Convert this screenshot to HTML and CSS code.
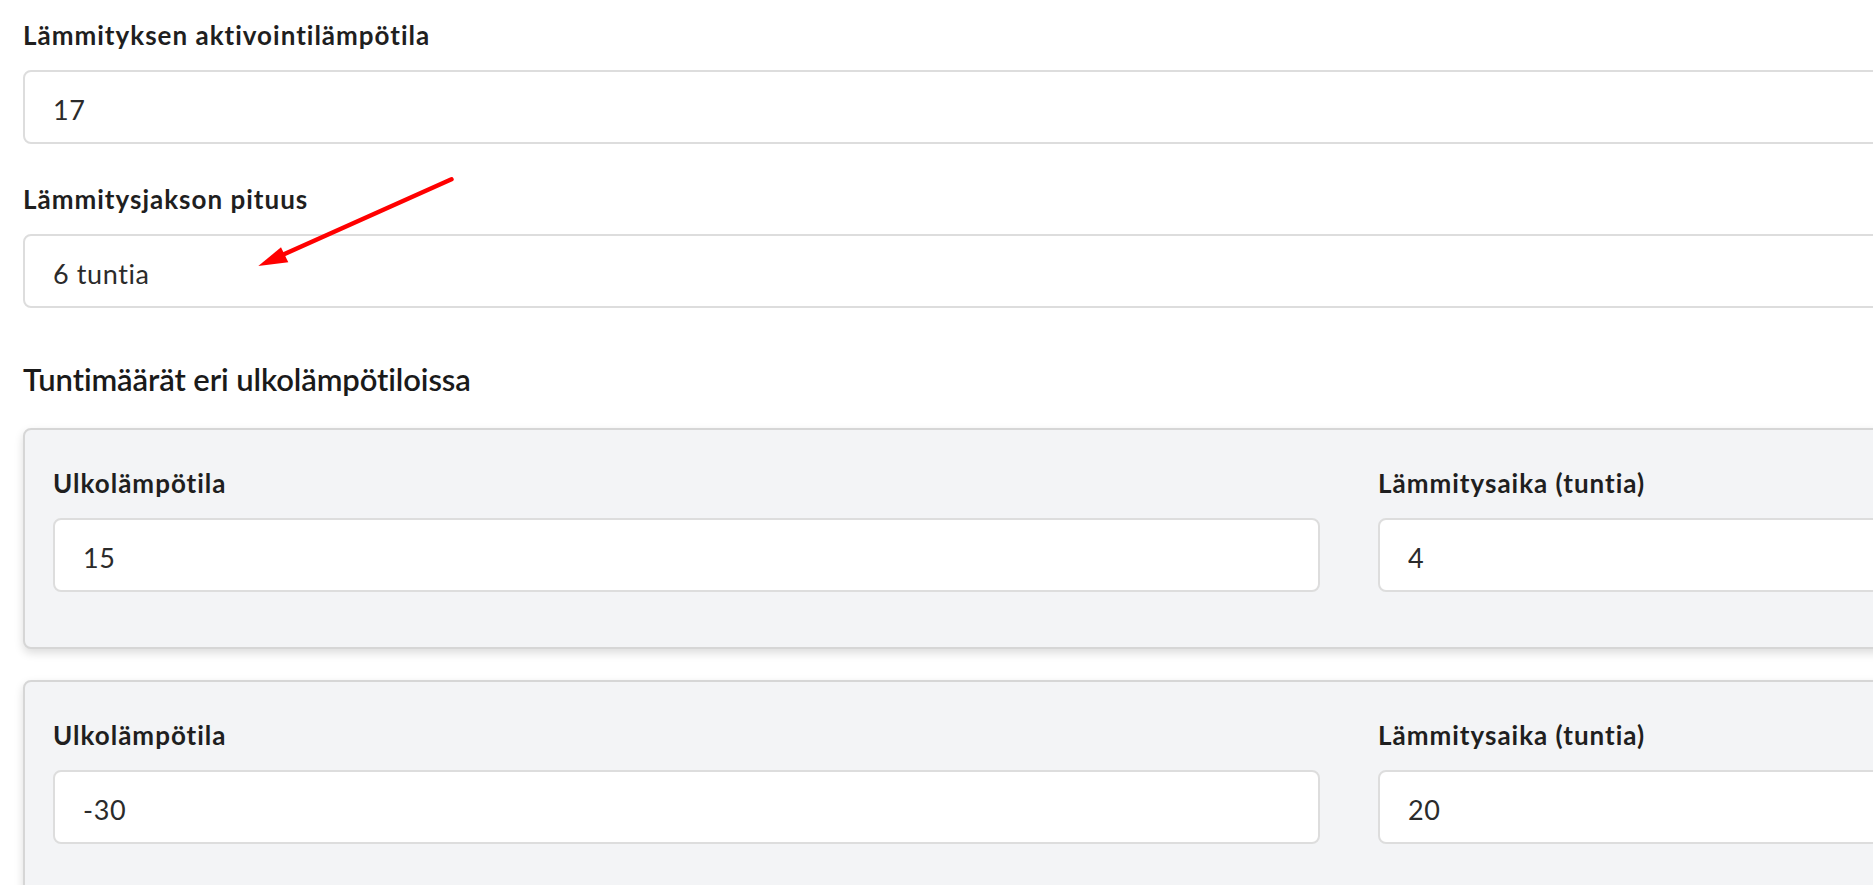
FILE: index.html
```html
<!DOCTYPE html>
<html lang="fi">
<head>
<meta charset="utf-8">
<title>Lämmitysasetukset</title>
<link rel="stylesheet" href="styles.css">
</head>
<body>
<div class="page">
  <div class="field">
    <label class="label">Lämmityksen aktivointilämpötila</label>
    <input class="input" type="text" value="17" readonly>
  </div>
  <div class="field">
    <label class="label">Lämmitysjakson pituus</label>
    <input class="input" type="text" value="6 tuntia" readonly>
  </div>

  <h2 class="heading">Tuntimäärät eri ulkolämpötiloissa</h2>

  <div class="card">
    <div class="grid">
      <div class="cell">
        <label class="label">Ulkolämpötila</label>
        <input class="input" type="text" value="15" readonly>
      </div>
      <div class="cell">
        <label class="label">Lämmitysaika (tuntia)</label>
        <input class="input" type="text" value="4" readonly>
      </div>
    </div>
  </div>

  <div class="card">
    <div class="grid">
      <div class="cell">
        <label class="label">Ulkolämpötila</label>
        <input class="input" type="text" value="-30" readonly>
      </div>
      <div class="cell">
        <label class="label">Lämmitysaika (tuntia)</label>
        <input class="input" type="text" value="20" readonly>
      </div>
    </div>
  </div>

  <svg class="arrow" width="1873" height="885" viewBox="0 0 1873 885" aria-hidden="true">
    <line x1="451.5" y1="179.3" x2="280" y2="256" stroke="#ff0000" stroke-width="4.5" stroke-linecap="round"/>
    <polygon points="258.3,266 281,247.3 288.3,262.3" fill="#ff0000"/>
  </svg>
</div>
</body>
</html>
```
FILE: styles.css
```css
html, body {
  margin: 0;
  padding: 0;
  overflow: hidden;
  background: #ffffff;
}

body {
  width: 1873px;
  height: 885px;
  font-family: "Lato", "Liberation Sans", sans-serif;
  color: #1f1f1f;
  font-variant-ligatures: none;
}

.page {
  position: relative;
  width: 2652px;
  padding: 17px 0 0 23px;
}

.field {
  display: flex;
  flex-direction: column;
  margin-bottom: 37px;
}

.label {
  display: block;
  font-family: "Lato", sans-serif;
  font-weight: 700;
  font-size: 26px;
  letter-spacing: 1px;
  line-height: 36px;
  color: #1f1f1f;
  margin-bottom: 17px;
  font-variant-ligatures: none;
}

.input {
  box-sizing: border-box;
  width: 100%;
  height: 74px;
  margin: 0;
  padding: 4px 28px 0 28px;
  border: 2px solid #dddddd;
  border-radius: 8px;
  background: #ffffff;
  font-family: "Lato", sans-serif;
  font-weight: 400;
  font-size: 27px;
  letter-spacing: 0.6px;
  color: #2b2b2b;
  outline: none;
  font-variant-ligatures: none;
}

.heading {
  margin: 52px 0 30px 0;
  font-family: "Lato", sans-serif;
  font-weight: 600;
  font-size: 31px;
  letter-spacing: -0.1px;
  line-height: 38px;
  color: #1a1a1a;
  font-variant-ligatures: none;
}

.card {
  box-sizing: border-box;
  width: 2652px;
  padding: 35px 28px 55px 28px;
  margin-bottom: 31px;
  background: #f3f4f6;
  border: 2px solid #d6d6d6;
  border-radius: 8px;
  box-shadow: 0 4px 10px rgba(0, 0, 0, 0.14);
}

.grid {
  display: grid;
  grid-template-columns: 1fr 1fr;
  column-gap: 58px;
}

.cell {
  display: flex;
  flex-direction: column;
}

.arrow {
  position: absolute;
  left: 0;
  top: 0;
  pointer-events: none;
}
```
